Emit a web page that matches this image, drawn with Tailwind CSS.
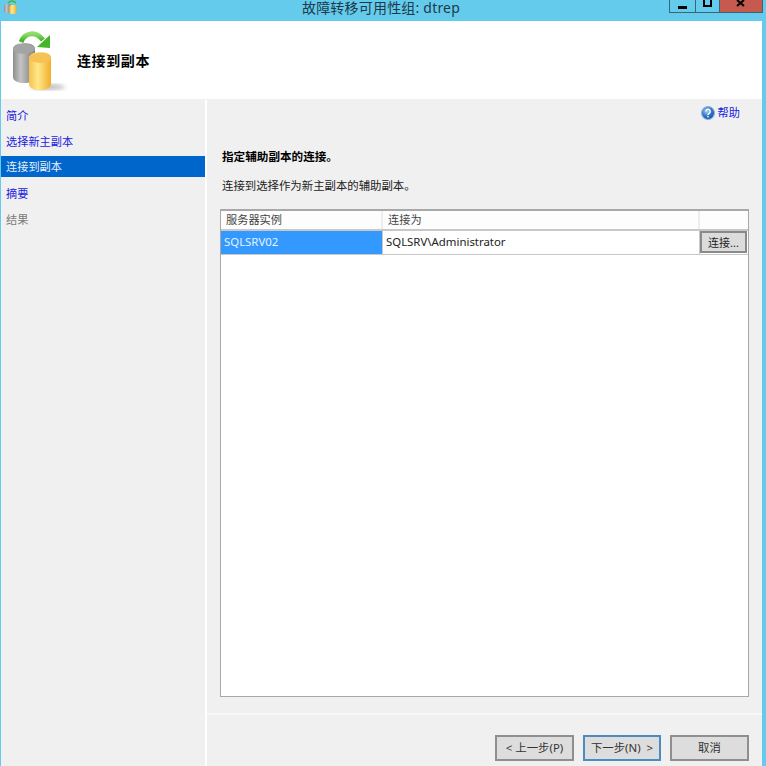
<!DOCTYPE html>
<html lang="zh-CN">
  <head>
    <meta charset="UTF-8" />
    <meta name="viewport" content="width=device-width, initial-scale=1.0" />
    <script src="https://cdn.jsdelivr.net/npm/@tailwindcss/browser@4"></script>
    <title>故障转移可用性组: dtrep</title>
  </head>
  <body class="w-[766px] h-[766px] overflow-hidden bg-[#65cbec] font-['Noto_Sans','Noto_Sans_CJK_SC',sans-serif] text-[11.4px] text-[#222]">
    <svg width="0" height="0" class="absolute">
      <defs>
        <linearGradient id="gray" x1="0" x2="1" y1="0" y2="0">
          <stop offset="0" stop-color="#8e8e8e" />
          <stop offset="0.35" stop-color="#c4c4c4" />
          <stop offset="1" stop-color="#777777" />
        </linearGradient>
        <linearGradient id="gold" x1="0" x2="1" y1="0" y2="0">
          <stop offset="0" stop-color="#f6c24a" />
          <stop offset="0.4" stop-color="#ffe88a" />
          <stop offset="1" stop-color="#f2ad2c" />
        </linearGradient>
        <linearGradient id="green" x1="0" x2="0" y1="0" y2="1">
          <stop offset="0" stop-color="#8fdc6a" />
          <stop offset="1" stop-color="#35ad22" />
        </linearGradient>
        <radialGradient id="help" cx="0.4" cy="0.35" r="0.7">
          <stop offset="0" stop-color="#a8d0f4" />
          <stop offset="0.6" stop-color="#2a6fc4" />
          <stop offset="1" stop-color="#174f9e" />
        </radialGradient>
        <filter id="soft"><feGaussianBlur stdDeviation="0.4" /></filter>
        <filter id="shadow"><feGaussianBlur stdDeviation="2" /></filter>
      </defs>
    </svg>

    <!-- title bar -->
    <div class="relative h-[21px] flex items-center justify-center pr-[4px] text-[14px] text-[#1c3a4a] leading-none">
      <svg class="absolute left-[3px] top-0" width="15" height="15" viewBox="0 0 15 15" filter="url(#soft)">
        <path d="M5 3q4-4 8 0" fill="none" stroke="#4cb82e" stroke-width="1.500" />
        <rect x="1" y="4" width="7" height="9" rx="2" fill="url(#gray)" />
        <rect x="6.500" y="5" width="7" height="9" rx="2" fill="url(#gold)" />
      </svg>
      <span class="-mt-[5px] tracking-[0.2px]">故障转移可用性组: dtrep</span>
      <div class="absolute left-[669px] top-0 h-[13px] w-[94px] flex border-b border-x border-[#3d6474]">
        <div class="w-[26px] border-r border-[#3d6474] flex items-center justify-center">
          <div class="w-[9px] h-[3px] bg-black mt-[2px]"></div>
        </div>
        <div class="w-[24px] border-r border-[#3d6474] flex justify-center">
          <div class="w-[9px] h-[7px] border-2 border-black border-t-0"></div>
        </div>
        <div class="flex-1 bg-[#c75a4e] flex justify-center">
          <svg width="10" height="7" viewBox="0 0 10 7"><path d="M1 0l7 6M8 0L1 6" stroke="#000" stroke-width="2" /></svg>
        </div>
      </div>
    </div>

    <!-- window body -->
    <div class="ml-px mr-[4px] h-[745px] flex flex-col bg-[#f0f0f0]">
      <div class="h-[78px] bg-white flex items-center">
        <svg class="ml-[11px] mb-[2px] overflow-visible" width="50" height="60" viewBox="0 0 50 60">
          <ellipse cx="36" cy="58" rx="17" ry="3" fill="#000" opacity="0.25" filter="url(#shadow)" />
          <g filter="url(#soft)">
            <path d="M9 13C13 3 24 2 31 11" fill="none" stroke="url(#green)" stroke-width="5" />
            <path d="M38 6v13l-13-1z" fill="#45b52a" />
            <path d="M1 20c0-8 22-8 22 0v28c0 8-22 8-22 0z" fill="url(#gray)" />
            <ellipse cx="12" cy="20" rx="11" ry="5" fill="#a4a4a4" />
            <path d="M17 29c0-8 22-8 22 0v26c0 8-22 8-22 0z" fill="url(#gold)" />
            <ellipse cx="28" cy="29" rx="11" ry="5" fill="#f7c254" />
          </g>
        </svg>
        <span class="ml-[15px] text-[14px] font-bold tracking-[0.6px] text-black">连接到副本</span>
      </div>

      <div class="flex-1 flex pt-px">
        <!-- steps -->
        <div class="w-[204px] pt-[2px] text-[11.2px] text-[#1a1ae0]">
          <div class="h-[26px] pl-[5px] pt-[2px] flex items-center">简介</div>
          <div class="h-[26px] pl-[5px] pt-[2px] flex items-center">选择新主副本</div>
          <div class="h-[26px] flex items-center">
            <div class="w-full h-[21px] pl-[5px] pt-[2px] -mt-px flex items-center bg-[#0066cc] text-[#e8f0fa]">连接到副本</div>
          </div>
          <div class="h-[26px] pl-[5px] pt-[2px] flex items-center">摘要</div>
          <div class="h-[26px] pl-[5px] pt-[2px] flex items-center text-[#7a7a7a]">结果</div>
        </div>
        <div class="w-[2px] bg-white"></div>

        <!-- page -->
        <div class="flex-1 flex flex-col">
          <div class="h-[613px] pl-[13px] pr-[13px] flex flex-col">
            <div class="h-[26px] flex items-center justify-end pr-[9px] gap-[3px] text-[11.2px] text-[#1a1ae0]">
              <svg width="14" height="14" viewBox="0 0 13 13">
                <circle cx="6.500" cy="6.500" r="6" fill="url(#help)" stroke="#8db4dc" />
                <path d="M4.500 5a2 2 0 1 1 3 1.800c-.7.4-1 .8-1 1.500" fill="none" stroke="#fff" stroke-width="1.300" />
                <rect x="5.800" y="9.200" width="1.400" height="1.400" fill="#fff" />
              </svg>
              <span>帮助</span>
            </div>
            <p class="mt-[22px] pl-[2px] h-[18px] leading-[18px] text-[11.6px] font-bold text-black">指定辅助副本的连接。</p>
            <p class="mt-[11px] pl-[2px] h-[18px] leading-[18px] text-[11.4px]">连接到选择作为新主副本的辅助副本。</p>
            <!-- grid -->
            <div class="mt-[14px] h-[488px] bg-white border border-[#a8a8a8] border-t-2">
              <div class="h-[18px] flex text-[11.2px] text-[#444] bg-[#fdfdfd] border-b-2 border-[#c8c8c8] box-content">
                <div class="w-[162px] pl-[5px] border-r-2 border-[#ededed] leading-[18px]">服务器实例</div>
                <div class="w-[317px] pl-[5px] border-r-2 border-[#ededed] leading-[18px]">连接为</div>
                <div class="flex-1"></div>
              </div>
              <div class="h-[23px] flex border-b border-[#c8c8c8] box-content">
                <div class="w-[162px] pl-[3px] bg-[#3399ff] text-[#e6f2ff] border-r border-[#c8c8c8] leading-[22px]">SQLSRV02</div>
                <div class="w-[317px] pl-[3px] border-r border-[#c8c8c8] leading-[22px] text-[#222]">SQLSRV\Administrator</div>
                <div class="flex-1">
                  <button class="block w-[47px] h-[22px] bg-[#dcdcdc] border-2 border-[#8a8a8a] text-[11px] leading-none text-[#222]">连接...</button>
                </div>
              </div>
            </div>
          </div>

          <div class="h-[2px] bg-[#f8f8f8]"></div>
          <div class="flex-1 flex gap-[9px] pl-[288px] pt-[20px]">
            <button class="w-[79px] h-[26px] bg-[#dddddd] border-2 border-[#8f8f8f] text-[11.4px] leading-none text-[#333]">&lt; 上一步(P)</button>
            <button class="w-[78px] h-[26px] bg-[#dddddd] border-2 border-[#4a8cc0] text-[11.4px] leading-none text-[#333]">下一步(N)&nbsp;&nbsp;&gt;</button>
            <button class="w-[79px] h-[26px] bg-[#dddddd] border-2 border-[#8f8f8f] text-[11.4px] leading-none text-[#333]">取消</button>
          </div>
        </div>
      </div>
    </div>
  </body>
</html>
